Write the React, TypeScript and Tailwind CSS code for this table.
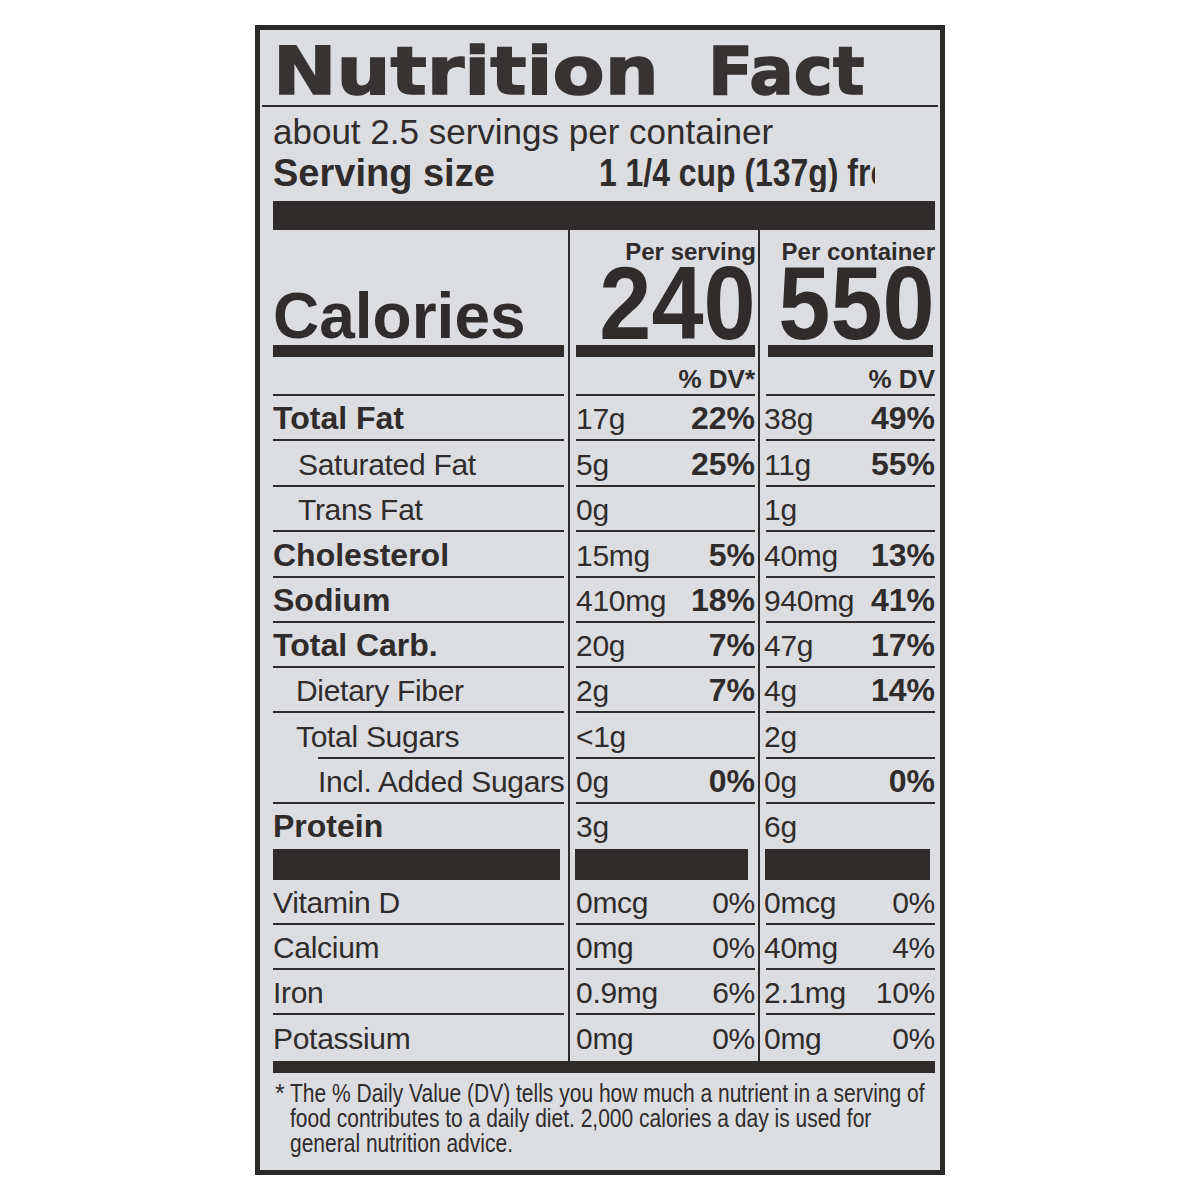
import React from 'react'

interface Nutrient {
  label: string
  bold?: boolean
  indent?: string
  a: string
  aPct?: string
  b: string
  bPct?: string
  h: string
  lineIndent?: boolean
  noLine?: boolean
  plain?: boolean
}

const ink = 'bg-[#2e2b2a]'
const colBorder = ['', 'border-l-2 border-[#2e2b2a]', 'border-l-2 border-[#2e2b2a]']
const lineMargin = ['mr-[4px]', 'ml-[6px] mr-[3px]', 'ml-[6px]']
const textPad = ['', 'pl-[6px] pr-[3px]', 'pl-[4px]']

const nutrients: Nutrient[] = [
  { label: 'Total Fat', bold: true, a: '17g', aPct: '22%', b: '38g', bPct: '49%', h: 'h-[45px]' },
  { label: 'Saturated Fat', indent: 'pl-[25px]', a: '5g', aPct: '25%', b: '11g', bPct: '55%', h: 'h-[46px]' },
  { label: 'Trans Fat', indent: 'pl-[25px]', a: '0g', b: '1g', h: 'h-[45px]' },
  { label: 'Cholesterol', bold: true, a: '15mg', aPct: '5%', b: '40mg', bPct: '13%', h: 'h-[46px]' },
  { label: 'Sodium', bold: true, a: '410mg', aPct: '18%', b: '940mg', bPct: '41%', h: 'h-[45px]' },
  { label: 'Total Carb.', bold: true, a: '20g', aPct: '7%', b: '47g', bPct: '17%', h: 'h-[45px]' },
  { label: 'Dietary Fiber', indent: 'pl-[23px]', a: '2g', aPct: '7%', b: '4g', bPct: '14%', h: 'h-[45px]' },
  { label: 'Total Sugars', indent: 'pl-[23px]', a: '<1g', b: '2g', h: 'h-[46px]', lineIndent: true },
  { label: 'Incl. Added Sugars', indent: 'pl-[45px]', a: '0g', aPct: '0%', b: '0g', bPct: '0%', h: 'h-[45px]' },
  { label: 'Protein', bold: true, a: '3g', b: '6g', h: 'h-[45px]', noLine: true },
]

const vitamins: Nutrient[] = [
  { label: 'Vitamin D', a: '0mcg', aPct: '0%', b: '0mcg', bPct: '0%', h: 'h-[45px]', plain: true },
  { label: 'Calcium', a: '0mg', aPct: '0%', b: '40mg', bPct: '4%', h: 'h-[45px]', plain: true },
  { label: 'Iron', a: '0.9mg', aPct: '6%', b: '2.1mg', bPct: '10%', h: 'h-[45px]', plain: true },
  { label: 'Potassium', a: '0mg', aPct: '0%', b: '0mg', bPct: '0%', h: 'h-[46px]', plain: true, noLine: true },
]

interface CellProps {
  col: 0 | 1 | 2
  h: string
  line?: boolean
  lineClass?: string
  gap?: string
  children?: React.ReactNode
}

const Cell: React.FC<CellProps> = ({ col, h, line = true, lineClass = '', gap = 'mb-[5px]', children }) => {
  return (
    <div className={`${h} ${colBorder[col]} flex flex-col justify-end min-w-0`}>
      <div className={`${textPad[col]} ${gap} flex items-baseline justify-between whitespace-nowrap`}>
        {children}
      </div>
      <div className={`h-[2px] ${line ? ink : ''} ${lineMargin[col]} ${lineClass}`} />
    </div>
  )
}

const Bar: React.FC<{ col: 0 | 1 | 2; h: string; m: string }> = ({ col, h, m }) => (
  <div className={`${h} ${colBorder[col]}`}>
    <div className={`h-full ${ink} ${m}`} />
  </div>
)

const regular = 'text-[30px] leading-none tracking-[-0.3px]'
const heavy = 'text-[32px] leading-none font-bold'

const NutrientRow: React.FC<{ n: Nutrient }> = ({ n }) => {
  const pct = n.plain ? regular : heavy
  return (
    <>
      <Cell col={0} h={n.h} line={!n.noLine} lineClass={n.lineIndent ? 'ml-[45px]' : ''}>
        <span className={`${n.bold ? heavy : regular} ${n.indent || ''}`}>{n.label}</span>
      </Cell>
      <Cell col={1} h={n.h} line={!n.noLine}>
        <span className={regular}>{n.a}</span>
        <span className={pct}>{n.aPct}</span>
      </Cell>
      <Cell col={2} h={n.h} line={!n.noLine}>
        <span className={regular}>{n.b}</span>
        <span className={pct}>{n.bPct}</span>
      </Cell>
    </>
  )
}

export default function App() {
  return (
    <div className="w-[1200px] h-[1200px] bg-white pt-[25px] pl-[255px] font-['Liberation_Sans',Arial,sans-serif] text-[#2f2c2b]">
      <div className="w-[690px] h-[1150px] border-[5px] border-[#2b2928] bg-[#dcdde1] pl-[13px] pr-[5px]">
        {/* title */}
        <div className="pt-[9px] flex text-[66px] leading-none font-bold font-['DejaVu_Sans',sans-serif] text-[#363332] whitespace-nowrap [-webkit-text-stroke:1.5px_#363332]">
          <span className="w-[435px]">
            <span className="inline-block scale-x-[1.15] origin-left">Nutrition</span>
          </span>
          <span>Fact</span>
        </div>
        <div className={`h-[2px] ${ink} -ml-[11px] -mr-[3px]`} />

        <div className="mt-[7px] text-[35px] leading-none whitespace-nowrap">about 2.5 servings per container</div>
        <div className="mt-[5px] flex text-[38px] leading-none font-bold whitespace-nowrap">
          <span className="w-[326px]">Serving size</span>
          <span className="inline-block w-[276px] overflow-hidden">
            <span className="inline-block scale-x-[0.84] origin-left">1 1/4 cup (137g) fro</span>
          </span>
        </div>

        <div className={`mt-[9px] h-[29px] ${ink}`} />

        <div className="grid grid-cols-[295px_190px_minmax(0,1fr)]">
          {/* per serving / per container */}
          <div className="h-[34px]" />
          <div className={`h-[34px] ${colBorder[1]} flex items-end justify-end pr-[2px]`}>
            <span className="text-[24px] leading-none font-bold">Per serving</span>
          </div>
          <div className={`h-[34px] ${colBorder[2]} flex items-end justify-end`}>
            <span className="text-[24px] leading-none font-bold">Per container</span>
          </div>

          {/* calories */}
          <div className="h-[81px] flex items-end">
            <span className="text-[64px] leading-none font-bold -mb-[3px]">Calories</span>
          </div>
          <div className={`h-[81px] ${colBorder[1]} flex items-end justify-end pr-[2px] pb-[3px]`}>
            <span className="inline-block scale-x-[0.9] origin-right text-[104px] leading-[78px] font-bold">240</span>
          </div>
          <div className={`h-[81px] ${colBorder[2]} flex items-end justify-end min-w-0 pb-[3px]`}>
            <span className="inline-block scale-x-[0.9] origin-right text-[104px] leading-[78px] font-bold">550</span>
          </div>

          <Bar col={0} h="h-[12px]" m="mr-[4px]" />
          <Bar col={1} h="h-[12px]" m="ml-[6px] mr-[3px]" />
          <Bar col={2} h="h-[12px]" m="ml-[8px] mr-[2px]" />

          {/* % DV */}
          <Cell col={0} h="h-[39px]" gap="mb-[2px]" />
          <Cell col={1} h="h-[39px]" gap="mb-[2px]">
            <span />
            <span className="text-[26px] leading-none font-bold">% DV*</span>
          </Cell>
          <Cell col={2} h="h-[39px]" gap="mb-[2px]">
            <span />
            <span className="text-[26px] leading-none font-bold">% DV</span>
          </Cell>

          {nutrients.map((n) => (
            <NutrientRow key={n.label} n={n} />
          ))}

          <Bar col={0} h="h-[31px]" m="mr-[8px]" />
          <Bar col={1} h="h-[31px]" m="ml-[5px] mr-[10px]" />
          <Bar col={2} h="h-[31px]" m="ml-[5px] mr-[5px]" />

          {vitamins.map((n) => (
            <NutrientRow key={n.label} n={n} />
          ))}
        </div>

        <div className={`h-[12px] ${ink}`} />

        {/* footnote */}
        <div className="mt-[8px] flex text-[25px] leading-[25px] whitespace-nowrap">
          <span className="w-[17px] pl-[2px] shrink-0">*</span>
          <p className="inline-block scale-x-[0.84] origin-left">
            The % Daily Value (DV) tells you how much a nutrient in a serving of
            <br />
            food contributes to a daily diet. 2,000 calories a day is used for
            <br />
            general nutrition advice.
          </p>
        </div>
      </div>
    </div>
  )
}
